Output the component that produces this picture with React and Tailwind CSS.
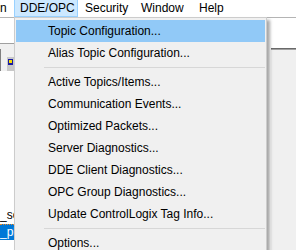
import React from "react";

const menuBar = [
  { label: "DDE/OPC", w: "w-[64px]", open: true },
  { label: "Security", w: "w-[56px]" },
  { label: "Window", w: "w-[58px]" },
  { label: "Help", w: "w-[40px]" },
];

const items = [
  { label: "Topic Configuration...", active: true },
  { label: "Alias Topic Configuration..." },
  { sep: true },
  { label: "Active Topics/Items..." },
  { label: "Communication Events..." },
  { label: "Optimized Packets..." },
  { label: "Server Diagnostics..." },
  { label: "DDE Client Diagnostics..." },
  { label: "OPC Group Diagnostics..." },
  { label: "Update ControlLogix Tag Info..." },
  { sep: true },
  { label: "Options..." },
];

const DocIcon = () => (
  <svg width="5" height="6" viewBox="0 0 5 6">
    <rect x="0" y="0" width="5" height="6" fill="#1a1aa0" />
    <rect x="1" y="1" width="3" height="3" fill="#f5e000" />
  </svg>
);

const App = () => {
  return (
    <div className="relative w-[296px] h-[250px] overflow-hidden bg-white text-black text-[12px] font-['Segoe_UI','Liberation_Sans',Arial,sans-serif]">
      {/* menu bar */}
      <div className="flex h-[17px] items-stretch bg-white leading-[16px]">
        <div className="w-[14px]">n</div>
        {menuBar.map((m) => (
          <div
            key={m.label}
            className={
              m.w +
              " whitespace-nowrap " +
              (m.open
                ? "pl-[5px] border border-t-0 border-[#99d1ff] bg-[#cce8ff]"
                : "pl-[7px]")
            }
          >
            {m.label}
          </div>
        ))}
      </div>
      <div className="h-px bg-[#b4b4b4]" />

      {/* content behind the menu */}
      <div className="flex h-[232px]">
        <div className="w-[14px] flex flex-col">
          <div className="h-[25px] bg-white" />
          <div className="h-px bg-[#a0a0a0]" />
          <div className="h-[27px] bg-[#f0f0f0] flex">
            <div className="w-px mt-[5px] bg-[#808080]" />
            <div className="ml-[6px] mt-[13px] w-[7px] bg-[#c8c8c8] flex justify-center pt-[2px]">
              <DocIcon />
            </div>
          </div>
          <div className="h-[137px] bg-white" />
          <div className="h-[16px] leading-[15px] whitespace-nowrap">_sc</div>
          <div className="h-[16px] leading-[14px] whitespace-nowrap bg-[#0078d7] text-white border-t border-dotted border-[#f08a24]">
            _pl
          </div>
        </div>
        <div className="flex-1" />
        <div className="w-[25px] flex flex-col">
          <div className="h-[30px] bg-white" />
          <div className="h-px bg-[#696969]" />
          <div className="h-px bg-[#a0a0a0]" />
          <div className="flex-1 bg-[#f0f0f0]" />
        </div>
      </div>

      {/* dropdown */}
      <div className="absolute z-10 left-[14px] top-[17px] w-[253px] h-[250px] bg-[#f0f0f0] border border-[#cccccc] px-px py-[2px] shadow-[3px_3px_3px_rgba(0,0,0,0.35)]">
        {items.map((it, i) =>
          it.sep ? (
            <div key={i} className="h-[7px] flex items-center pl-[28px]">
              <div className="h-px w-full bg-[#d7d7d7]" />
            </div>
          ) : (
            <div
              key={i}
              className={
                "h-[22px] flex items-center pl-[32px] whitespace-nowrap" +
                (it.active ? " bg-[#91c9f7]" : "")
              }
            >
              {it.label}
            </div>
          )
        )}
      </div>
    </div>
  );
};

export default App;
